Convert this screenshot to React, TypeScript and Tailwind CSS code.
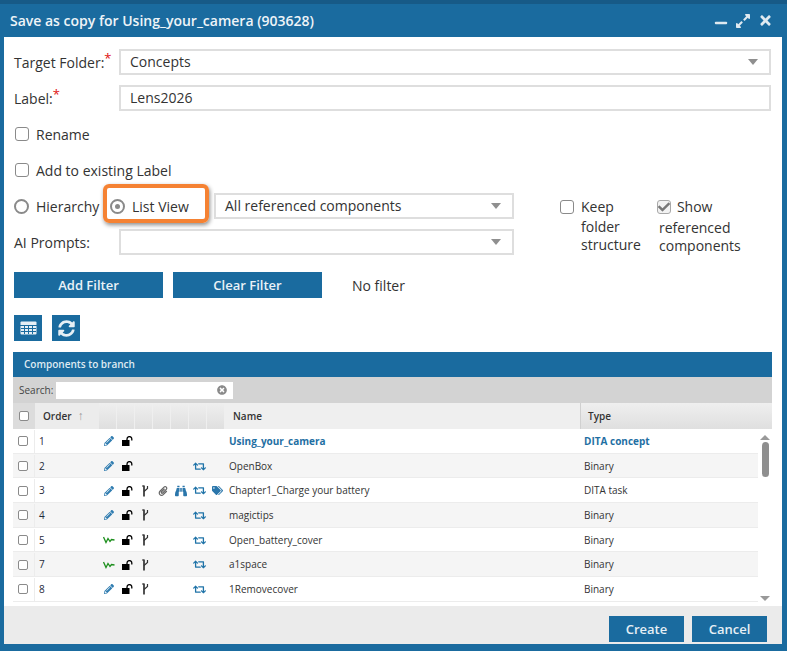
import {
  FaBinoculars,
  FaExpandAlt,
  FaMinus,
  FaPaperclip,
  FaPencilAlt,
  FaRetweet,
  FaSyncAlt,
  FaTags,
  FaTimes,
  FaTimesCircle,
  FaCheck,
} from "react-icons/fa";

type Row = {
  order: string;
  name: string;
  type: string;
  status: "edit" | "wave";
  branch?: boolean;
  clip?: boolean;
  find?: boolean;
  loop?: boolean;
  tags?: boolean;
  active?: boolean;
};

const ROWS: Row[] = [
  { order: "1", name: "Using_your_camera", type: "DITA concept", status: "edit", active: true },
  { order: "2", name: "OpenBox", type: "Binary", status: "edit", loop: true },
  { order: "3", name: "Chapter1_Charge your battery", type: "DITA task", status: "edit", branch: true, clip: true, find: true, loop: true, tags: true },
  { order: "4", name: "magictips", type: "Binary", status: "edit", branch: true, loop: true },
  { order: "5", name: "Open_battery_cover", type: "Binary", status: "wave", branch: true, loop: true },
  { order: "7", name: "a1space", type: "Binary", status: "wave", branch: true, loop: true },
  { order: "8", name: "1Removecover", type: "Binary", status: "edit", branch: true, loop: true },
];

const Caret = () => (
  <span className="h-0 w-0 border-x-[5px] border-t-[6px] border-x-transparent border-t-[#8f8f8f]" />
);

const Checkbox = ({ small }: { small?: boolean }) => (
  <span
    className={
      small
        ? "block h-[10px] w-[10px] shrink-0 rounded-[2px] border border-[#8a8a8a] bg-white"
        : "block h-[14px] w-[14px] shrink-0 rounded-[3px] border border-[#8a8a8a] bg-white"
    }
  />
);

const Required = () => <sup className="top-[-5px] text-[13px] text-[#e01010]">*</sup>;

const SelectBox = ({ className, text }: { className: string; text?: string }) => (
  <div className={`flex h-[26px] items-center justify-between border-2 border-[#dedede] pl-[9px] pr-[11px] ${className}`}>
    <span className="pb-[2px]">{text}</span>
    <Caret />
  </div>
);

const UnlockIcon = () => (
  <svg width="11" height="10" viewBox="0 0 11 10" className="text-black">
    <rect x="0" y="4" width="7.5" height="6" fill="currentColor" />
    <path d="M5 4.5V3A2.2 2.2 0 0 1 9.8 3V4.5" stroke="currentColor" strokeWidth="1.3" fill="none" />
  </svg>
);

const BranchIcon = () => (
  <svg width="7" height="12" viewBox="0 0 7 12" className="text-[#333]">
    <path d="M2 0.5V11.5" stroke="currentColor" strokeWidth="1.7" />
    <path d="M0 1H2M5.5 1V3.5L2 6.5" stroke="currentColor" strokeWidth="1.2" fill="none" />
  </svg>
);

const WaveIcon = () => (
  <svg width="12" height="8" viewBox="0 0 12 8" className="text-[#1d8f1d]">
    <path d="M0.5 1L3 6.5L5 2.5L7 5.5L8.5 3.5L11.5 4" stroke="currentColor" strokeWidth="1.3" fill="none" />
  </svg>
);

const TableIcon = () => (
  <svg width="17" height="14" viewBox="0 0 17 14" className="text-[#e6eff5]">
    <rect x="0.5" y="0.5" width="16" height="13" rx="1" fill="currentColor" />
    <path d="M0 4.5H17M1 7.5H16M1 10.5H16M4.5 4V13M8.5 4V13M12.5 4V13" stroke="#1a6b9f" strokeWidth="1" />
  </svg>
);

const IconCell = ({ children }: { children?: React.ReactNode }) => (
  <div className="flex w-[18px] shrink-0 items-center justify-center">{children}</div>
);

const GridRow = ({ row, even }: { row: Row; even: boolean }) => (
  <div className={`flex h-[24.7px] items-center border-b border-[#ececec] pt-[1px] ${even ? "bg-[#f5f5f5]" : "bg-white"}`}>
    <div className="flex h-full w-[22px] shrink-0 items-center justify-center border-r border-[#ececec] pr-[1px]">
      <Checkbox small />
    </div>
    <div className="w-[65px] shrink-0 pl-[4px] text-[#1f2a3a]">{row.order}</div>
    <IconCell>
      {row.status === "edit" ? <FaPencilAlt className="text-[10px] text-[#2f7cb0]" /> : <WaveIcon />}
    </IconCell>
    <IconCell>
      <UnlockIcon />
    </IconCell>
    <IconCell>{row.branch && <BranchIcon />}</IconCell>
    <IconCell>{row.clip && <FaPaperclip className="text-[10px] text-[#666]" />}</IconCell>
    <IconCell>{row.find && <FaBinoculars className="text-[12px] text-[#2a76ab]" />}</IconCell>
    <IconCell>{row.loop && <FaRetweet className="text-[13px] text-[#1f73a8]" />}</IconCell>
    <IconCell>{row.tags && <FaTags className="text-[11px] text-[#2a76ab]" />}</IconCell>
    <div className={`w-[354px] shrink-0 pl-[3px] ${row.active ? "font-bold text-[#1f6fa3]" : "text-[#333]"}`}>
      {row.name}
    </div>
    <div className={`pl-[4px] ${row.active ? "font-bold text-[#1f6fa3]" : "text-[#333]"}`}>{row.type}</div>
  </div>
);

export default function App() {
  return (
    <div className="h-[651px] w-[787px] overflow-hidden bg-[#1a6b9f] font-['Open_Sans',sans-serif] text-[14px] text-[#333]">
      <div className="h-[4px] bg-[#175a87]" />
      <div className="flex h-[33px] items-center justify-between pl-[10px] pr-[14px] text-white">
        <span className="text-[14px] font-semibold text-[#eef4f8]">Save as copy for Using_your_camera (903628)</span>
        <div className="flex items-center gap-[7px] text-[#dfe9f0]">
          <FaMinus className="mt-[4px] text-[14px]" />
          <FaExpandAlt className="text-[16px]" />
          <FaTimes className="text-[15px]" />
        </div>
      </div>

      <div className="relative ml-[4px] flex h-[607px] w-[778px] flex-col bg-white">
        <div className="flex-1 pl-[10px] pt-[12px]">
          <div className="flex h-[26px] items-center">
            <span className="w-[105px]">
              Target Folder:<Required />
            </span>
            <SelectBox className="w-[652px]" text="Concepts" />
          </div>
          <div className="mt-[10px] flex h-[26px] items-center">
            <span className="w-[105px]">
              Label:<Required />
            </span>
            <div className="flex h-[26px] w-[652px] items-center border-2 border-[#dedede] pb-[2px] pl-[9px]">Lens2026</div>
          </div>
          <div className="mt-[16px] flex h-[14px] items-center gap-[7px] pl-[1px]">
            <Checkbox />
            <span>Rename</span>
          </div>
          <div className="mt-[22px] flex h-[14px] items-center gap-[7px] pl-[1px]">
            <Checkbox />
            <span>Add to existing Label</span>
          </div>

          <div className="mt-[16px] flex h-[26px] items-center">
            <span className="h-[15px] w-[15px] shrink-0 rounded-full border-2 border-[#8a8a8a]" />
            <span className="ml-[7px] w-[74px]">Hierarchy</span>
            <span className="flex h-[15px] w-[15px] shrink-0 items-center justify-center rounded-full border-2 border-[#8a8a8a]">
              <span className="h-[5px] w-[5px] rounded-full bg-[#8a8a8a]" />
            </span>
            <span className="ml-[7px] w-[82px]">List View</span>
            <SelectBox className="w-[300px]" text="All referenced components" />
            <div className="ml-[46px] flex h-full items-center gap-[7px] self-start pt-[2px]">
              <Checkbox />
              <span className="leading-none">Keep</span>
            </div>
            <div className="ml-[43px] flex h-full items-center gap-[6px] self-start pt-[2px]">
              <span className="flex h-[14px] w-[14px] shrink-0 items-center justify-center rounded-[3px] border border-[#a8a8a8] bg-[#f2f2f2]">
                <FaCheck className="text-[12px] text-[#777]" />
              </span>
              <span className="leading-none">Show</span>
            </div>
          </div>

          <div className="mt-[10px] flex h-[26px] items-start">
            <span className="flex h-[26px] w-[105px] items-center">AI Prompts:</span>
            <SelectBox className="w-[395px]" />
            <div className="ml-[67px] mt-[-11px] w-[70px] leading-[18px]">
              folder
              <br />
              structure
            </div>
            <div className="ml-[8px] mt-[-10px] leading-[18px]">
              referenced
              <br />
              components
            </div>
          </div>

          <div className="mt-[17px] flex h-[26px] items-center">
            <button className="h-[26px] w-[149px] bg-[#1a6b9f] pt-[1px] text-[13px] font-semibold text-[#eaf2f7]">Add Filter</button>
            <button className="ml-[10px] h-[26px] w-[149px] bg-[#1a6b9f] pt-[1px] text-[13px] font-semibold text-[#eaf2f7]">Clear Filter</button>
            <span className="ml-[30px]">No filter</span>
          </div>

          <div className="mt-[17px] flex gap-[10px]">
            <span className="flex h-[26px] w-[28px] items-center justify-center bg-[#1a6b9f]">
              <TableIcon />
            </span>
            <span className="flex h-[26px] w-[28px] items-center justify-center bg-[#1a6b9f] text-[#e6eff5]">
              <FaSyncAlt className="text-[17px]" />
            </span>
          </div>

          <div className="relative ml-[-1px] mt-[11px] w-[759px] text-[10px]">
            <div className="flex h-[25px] items-center bg-[#1a6b9f] pl-[11px] font-semibold text-[#dfeaf2]">Components to branch</div>
            <div className="flex h-[26px] items-center bg-[#d3d3d3] pl-[6px]">
              <span className="text-[#444]">Search:</span>
              <div className="ml-[3px] flex h-[17px] w-[177px] items-center justify-end bg-white pr-[6px]">
                <FaTimesCircle className="text-[10px] text-[#8a8a8a]" />
              </div>
            </div>
            <div className="flex h-[26px] items-center bg-gradient-to-b from-[#efefef] to-[#dfdfdf] font-semibold text-[#333]">
              <div className="flex h-full w-[22px] shrink-0 items-center justify-center bg-[#dcdcdc] pr-[1px]">
                <Checkbox small />
              </div>
              <div className="flex h-full w-[64px] shrink-0 items-center gap-[6px] bg-[#ececec] pl-[8px]">
                Order <span className="text-[12px] font-normal text-[#999]">↑</span>
              </div>
              {[0, 1, 2, 3, 4, 5, 6].map((i) => (
                <div key={i} className="h-full w-[18px] shrink-0 border-r border-[#efefef]" />
              ))}
              <div className="flex h-full w-[356px] shrink-0 items-center border-r border-[#d0d0d0] bg-[#efefef] pl-[8px]">Name</div>
              <div className="pl-[7px]">Type</div>
            </div>
            <div className="relative h-[177px] overflow-hidden">
              {ROWS.map((row, i) => (
                <GridRow key={row.order} row={row} even={i % 2 === 1} />
              ))}
              <div className="absolute right-0 top-0 flex h-full w-[14px] flex-col items-center bg-white pt-[6px]">
                <span className="h-0 w-0 border-x-[5px] border-b-[5px] border-x-transparent border-b-[#999]" />
                <span className="mt-[2px] h-[35px] w-[7px] rounded-[4px] bg-[#8f8f8f]" />
                <span className="absolute top-[167px] h-0 w-0 border-x-[5px] border-t-[5px] border-x-transparent border-t-[#999]" />
              </div>
            </div>
          </div>
        </div>

        <div className="flex h-[38px] shrink-0 items-start justify-end gap-[8px] bg-[#ebebeb] pr-[15px] pt-[10px]">
          <button className="h-[26px] w-[75px] bg-[#1a6b9f] pt-[1px] text-[13px] font-semibold text-[#e6eff5]">Create</button>
          <button className="h-[26px] w-[75px] bg-[#1a6b9f] pt-[1px] text-[13px] font-semibold text-[#e6eff5]">Cancel</button>
        </div>

        <div className="absolute left-[99px] top-[147px] h-[39px] w-[106px] rounded-[6px] border-4 border-[#f58233] shadow-[1px_2px_4px_rgba(0,0,0,0.45)]" />
      </div>
    </div>
  );
}
